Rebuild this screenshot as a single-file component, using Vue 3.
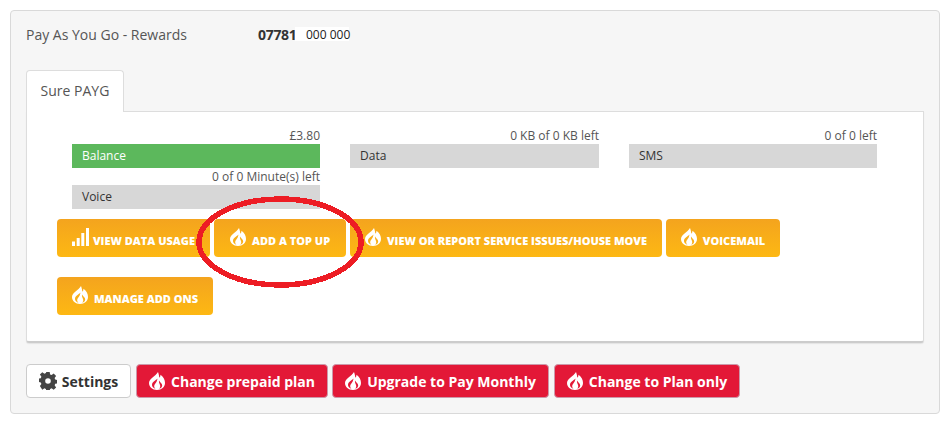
<script setup>
const bars = [
  { caption: '£3.80', label: 'Balance', green: true },
  { caption: '0 KB of 0 KB left', label: 'Data' },
  { caption: '0 of 0 left', label: 'SMS' },
  { caption: '0 of 0 Minute(s) left', label: 'Voice' }
]
const actions = [
  { text: 'VIEW DATA USAGE', icon: 'bars', w: 153 },
  { text: 'ADD A TOP UP', w: 132 },
  { text: 'VIEW OR REPORT SERVICE ISSUES/HOUSE MOVE', w: 312 },
  { text: 'VOICEMAIL', w: 114 },
  { text: 'MANAGE ADD ONS', w: 156 }
]
const reds = [
  { text: 'Change prepaid plan', w: 192 },
  { text: 'Upgrade to Pay Monthly', w: 217 },
  { text: 'Change to Plan only', w: 186 }
]
const flame = 'M9 0C10 2.500 10 4.500 10.500 5.800C11 5 11.500 4 11.500 2.800C14.500 5 16 8 16 11C16 15 12.500 18 8 18C3.500 18 0 15 0 11C0 6.500 6.500 4.500 9 0zM8.500 6.500C7 8.500 3 9.500 3 13C3 14.800 4.500 16.200 6.500 16.800C5.200 15.500 5 14.500 5.300 13.500C5.800 11.500 8 10.500 8.500 6.500zM10 8.500C11 10.500 13.200 11.300 13.200 13.500C13.200 15 12 16.200 10.300 16.800C11.200 15.500 11.500 14.500 11 13C10.600 11.800 9.700 10.500 10 8.500z'
</script>

<template>
  <div class="page">
    <section class="panel">
      <header class="head">
        <span class="plan">Pay As You Go - Rewards</span>
        <strong class="num">07781</strong>
        <span class="rest">000 000</span>
      </header>
      <div class="tab">Sure PAYG</div>
      <div class="content">
        <div class="bars">
          <div v-for="b in bars" :key="b.label" class="meter">
            <div class="cap">{{ b.caption }}</div>
            <div class="bar" :class="{ green: b.green }">{{ b.label }}</div>
          </div>
        </div>
        <div class="actions">
          <a v-for="a in actions" :key="a.text" class="act" :class="{ tight: a.icon === 'bars' }" :style="{ width: a.w + 'px' }">
            <svg v-if="a.icon === 'bars'" class="ico" viewBox="0 0 17 18" width="17" height="18"><path d="M0 13.500h3V18H0zM4.700 10h3v8h-3zM9.300 5h3v13h-3zM14 0h3v18h-3z" fill="#fff"/></svg>
            <svg v-else class="ico" viewBox="0 0 16 18" width="16" height="18"><path :d="flame" fill="#fff" fill-rule="evenodd"/></svg>
            <span class="txt">{{ a.text }}</span>
          </a>
        </div>
      </div>
      <footer class="foot">
        <a class="settings">
          <svg viewBox="0 0 18 18" width="18" height="18"><path fill="#444" fill-rule="evenodd" d="M7.300 0h3.400l.4 2.500 1.500.6 2.100-1.500 2.400 2.400-1.500 2.100.6 1.500 2.300.4v3.400l-2.300.4-.6 1.500 1.500 2.100-2.400 2.400-2.100-1.500-1.500.6-.4 2.100H7.300l-.4-2.100-1.500-.6-2.100 1.500L.9 14l1.500-2.100-.6-1.500L-.5 10V6.600l2.300-.4.6-1.500L.9 2.600 3.300.2l2.100 1.500 1.500-.6zM9 6.200a2.800 2.800 0 1 0 0 5.600 2.800 2.800 0 0 0 0-5.600z"/></svg>
          <span>Settings</span>
        </a>
        <a v-for="r in reds" :key="r.text" class="red" :style="{ width: r.w + 'px' }">
          <svg viewBox="0 0 16 18" width="16" height="18"><path :d="flame" fill="#fff" fill-rule="evenodd"/></svg>
          <span>{{ r.text }}</span>
        </a>
      </footer>
    </section>
    <svg class="ring" viewBox="0 0 950 429" width="950" height="429" shape-rendering="crispEdges"><ellipse cx="280" cy="242" rx="81" ry="43" fill="none" stroke="#ed1c24" stroke-width="5.500"/></svg>
  </div>
</template>

<style>
html, body { margin: 0; background: #fff; }
</style>

<style scoped>
.page {
  position: relative;
  width: 950px;
  height: 429px;
  padding: 10px;
  box-sizing: border-box;
  font-family: "Open Sans", sans-serif;
  font-size: 12px;
  color: #555;
}
.panel {
  width: 930px;
  height: 404px;
  box-sizing: border-box;
  background: #f6f6f6;
  border: 1px solid #d9d9d9;
  border-radius: 4px;
  padding: 0 15px;
}
.head {
  display: flex;
  align-items: center;
  height: 46px;
  font-size: 14px;
}
.plan { width: 232px; color: #555; }
.num { color: #333; font-weight: 700; font-size: 14px; width: 37px; white-space: nowrap; letter-spacing: -0.300px; }
.rest {
  width: 54px;
  box-sizing: border-box;
  padding: 1px 0 0 11px;
  font-size: 12px;
  color: #222;
  background: #fff;
  line-height: 13px;
  white-space: nowrap;
}
.tab {
  width: 98px;
  height: 42px;
  margin-top: 13px;
  box-sizing: border-box;
  background: #fff;
  border: 1px solid #ddd;
  border-bottom: 0;
  border-radius: 4px 4px 0 0;
  font-size: 14px;
  line-height: 40px;
  text-align: center;
  color: #555;
  position: relative;
  z-index: 1;
}
.content {
  width: 898px;
  height: 232px;
  margin-top: -1px;
  box-sizing: border-box;
  background: #fff;
  border: 1px solid #ddd;
  border-bottom: 2px solid #ccc;
  border-radius: 0 0 3px 3px;
  box-shadow: 0 1px 1px #e4e4e4;
  padding: 15px 30px 0;
}
.bars {
  display: grid;
  grid-template-columns: 248px 249px 248px;
  column-gap: 30px;
  margin-left: 15px;
}
.cap {
  height: 17px;
  line-height: 17px;
  text-align: right;
  color: #555;
  font-size: 12px;
}
.bar {
  height: 24px;
  line-height: 24px;
  padding-left: 10px;
  background: #d7d7d7;
  color: #333;
  font-size: 12px;
}
.bar.green { background: #5cb85c; color: #fff; }
.actions {
  display: flex;
  flex-wrap: wrap;
  gap: 20px 4px;
  margin-top: 10px;
  width: 800px;
}
.act {
  display: flex;
  align-items: center;
  justify-content: center;
  gap: 6px;
  height: 38px;
  box-sizing: border-box;
  border-radius: 4px;
  background: linear-gradient(#f4a41e, #fdb813);
  color: #fff;
  font-weight: 800;
  font-size: 11px;
  white-space: nowrap;
}
.act.tight { gap: 4px; }
.ico { margin-bottom: 2px; }
.txt { margin-top: 5px; }
.foot {
  display: flex;
  gap: 4px;
  margin-top: 21px;
}
.foot a {
  display: flex;
  align-items: center;
  justify-content: center;
  height: 34px;
  box-sizing: border-box;
  border-radius: 4px;
  font-weight: 700;
  font-size: 14px;
  gap: 6px;
  white-space: nowrap;
}
.settings {
  width: 105px;
  margin-right: 1px;
  background: #fff;
  border: 1px solid #ccc;
  color: #333;
  gap: 5px !important;
}
.red {
  background: #e31837;
  color: #fff;
  border: 1px solid #c9a;
}
.red:last-child { margin-left: 1px; }
.ring {
  position: absolute;
  left: 0;
  top: 0;
  pointer-events: none;
}
</style>
